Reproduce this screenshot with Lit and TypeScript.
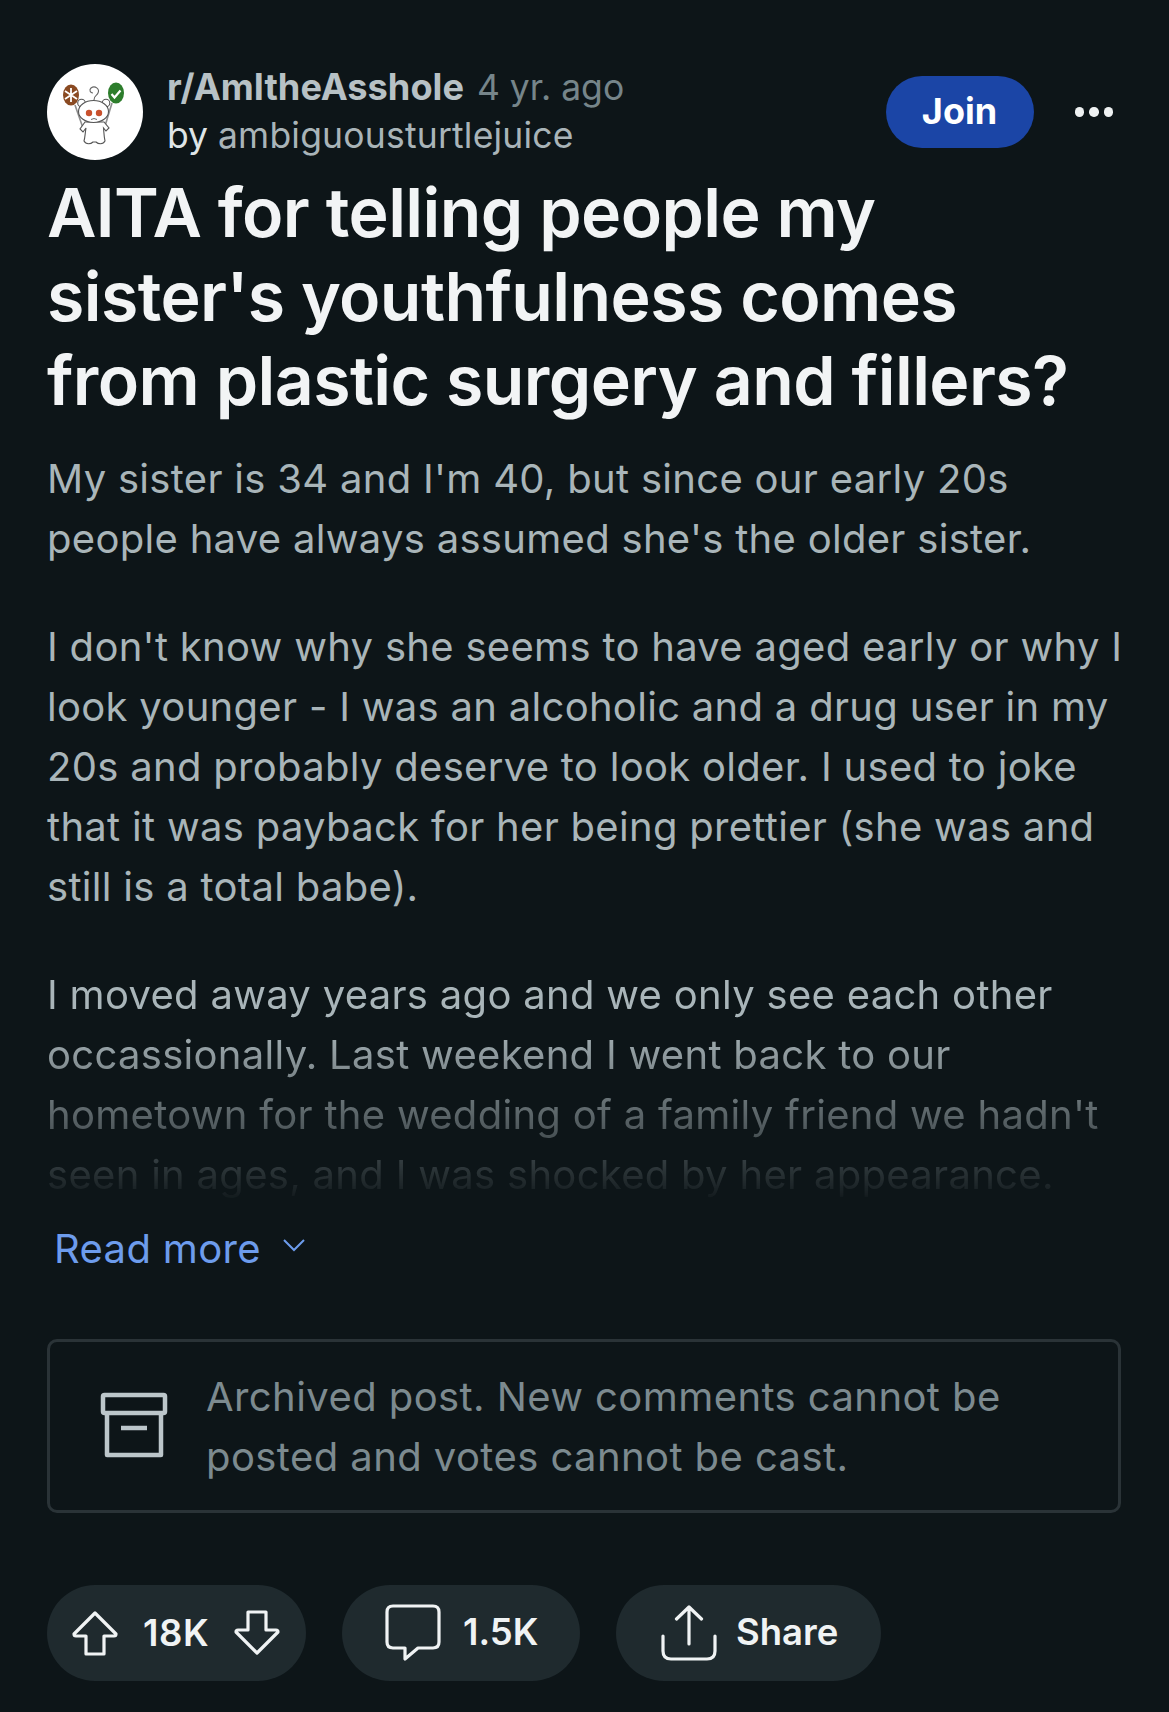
import { LitElement, html, css } from "lit";
import { customElement } from "lit/decorators.js";

@customElement("app-root")
export class AppRoot extends LitElement {
  static styles = css`
    :host { display: block; width: 1169px; height: 1712px; background: #0d1518; font-family: Inter, "Liberation Sans", sans-serif; overflow: hidden; }
    .page { padding: 64px 48px 0 47px; box-sizing: border-box; }
    .header { display: flex; align-items: center; height: 96px; }
    .avatar { width: 96px; height: 96px; flex: none; display: block; }
    .meta { margin-left: 24px; flex: 1; font-size: 35.5px; line-height: 48px; margin-top: -2px; white-space: nowrap; }
    .sub { font-weight: 700; font-size: 36.2px; color: #b7c1c5; }
    .time { color: #76858a; margin-left: 3px; }
    .by { color: #dfe5e7; }
    .user { color: #a9b4b8; letter-spacing: 0.2px; }
    .join { width: 148px; height: 72px; border-radius: 36px; background: #1b45a6; color: #fff; font-weight: 700; font-size: 36px; display: flex; align-items: center; justify-content: center; padding-bottom: 2px; box-sizing: border-box; }
    .dots { display: flex; gap: 5px; margin-left: 41px; margin-right: 8px; }
    .dots i { width: 9.5px; height: 9.5px; border-radius: 50%; background: #eef1f2; display: block; }
    h1 { margin: 10px 0 0; font-size: 68px; line-height: 84px; font-weight: 600; color: #f2f4f5; letter-spacing: -0.6px; white-space: nowrap; }
    .body { margin-top: 27px; font-size: 40px; line-height: 60px; color: #a9b5b9; white-space: nowrap; letter-spacing: 0.3px; }
    .body p { margin: 0 0 48px; }
    .body p:last-child { margin: 0; -webkit-mask-image: linear-gradient(#000 25%, transparent 100%); mask-image: linear-gradient(#000 25%, transparent 100%); }
    .more { margin-top: 13px; display: flex; align-items: center; height: 60px; color: #6d9cec; font-size: 40px; padding-left: 7px; letter-spacing: 0.35px; }
    .more svg { margin-left: 21px; width: 24px; height: 14px; margin-top: -6px; }
    .box { margin-top: 61px; height: 174px; box-sizing: border-box; border: 3px solid #2a3337; border-radius: 10px; display: flex; align-items: center; padding-left: 49px; color: #7c8a8f; font-size: 40px; line-height: 60px; white-space: nowrap; letter-spacing: 0.42px; }
    .box svg { width: 70px; height: 68px; flex: none; margin-right: 37px; }
    .box div { padding-top: 2px; }
    .actions { margin-top: 72px; display: flex; gap: 36px; }
    .pill { height: 96px; border-radius: 48px; background: #1f2a2e; display: flex; align-items: center; color: #f0f3f4; font-size: 36.5px; font-weight: 600; box-sizing: border-box; }
    .pill span { margin-top: -2px; }
    .pill svg { display: block; flex: none; fill: none; stroke: #f0f3f4; stroke-width: 3.2; stroke-linejoin: round; stroke-linecap: round; }
    .vote { width: 259px; padding-left: 25px; }
    .vote span { margin: 0 25px 0 25px; letter-spacing: 0.6px; }
    .comments { width: 238px; padding-left: 43px; }
    .comments span { margin-left: 22px; }
    .share { width: 265px; padding-left: 45px; }
    .share span { margin-left: 19px; }
  `;

  render() {
    return html`<div class="page">
      <div class="header">
        <svg class="avatar" viewBox="17 14 96 96">
          <circle cx="65" cy="62" r="48" fill="#fff"/>
          <g fill="none" stroke="#8f8f8f" stroke-width="1.6"><path d="M45 55 L53 78"/><path d="M82 53 L75 76"/></g>
          <ellipse cx="41" cy="45" rx="8" ry="10.5" fill="#8a4a22"/>
          <ellipse cx="86" cy="43" rx="8" ry="10.5" fill="#2d7d2c"/>
          <path d="M41 38v14M35 41l12 8M47 41l-12 8" stroke="#fff" stroke-width="1.8" fill="none"/>
          <path d="M81.500 44l3 3.500 6-7" stroke="#fff" stroke-width="2.2" fill="none"/>
          <g fill="#fff" stroke="#555" stroke-width="1.1">
            <circle cx="51.500" cy="53" r="3.800"/><circle cx="76" cy="53" r="3.800"/>
            <path d="M55 72 L50 79 L53 82 L56 78 C55 84 55 88 54 91 C56 95 61 94 63 92 L66 92 C68 94 73 95 75 91 C74 87 74 83 73.500 78 L76 81 L79 78 L74 72Z"/>
            <ellipse cx="63.500" cy="61.500" rx="15" ry="11"/>
          </g>
          <path d="M64 50 C64 45 67 46 68 43 C70 39 65 35 61 38 C59 40 60 43 63 43" fill="none" stroke="#666" stroke-width="1.1"/>
          <circle cx="59" cy="63" r="3.200" fill="#c9502c"/><circle cx="69" cy="63" r="3.200" fill="#c9502c"/>
          <path d="M61 69.500 q3 -2 6 0" stroke="#666" stroke-width="1" fill="none"/>
        </svg>
        <div class="meta">
          <div><span class="sub">r/AmItheAsshole</span> <span class="time">4 yr. ago</span></div>
          <div><span class="by">by</span> <span class="user">ambiguousturtlejuice</span></div>
        </div>
        <div class="join">Join</div>
        <div class="dots"><i></i><i></i><i></i></div>
      </div>
      <h1>AITA for telling people my<br>sister's youthfulness comes<br>from plastic surgery and fillers?</h1>
      <div class="body">
        <p>My sister is 34 and I'm 40, but since our early 20s<br>people have always assumed she's the older sister.</p>
        <p>I don't know why she seems to have aged early or why I<br>look younger - I was an alcoholic and a drug user in my<br>20s and probably deserve to look older. I used to joke<br>that it was payback for her being prettier (she was and<br>still is a total babe).</p>
        <p>I moved away years ago and we only see each other<br>occassionally. Last weekend I went back to our<br>hometown for the wedding of a family friend we hadn't<br>seen in ages, and I was shocked by her appearance.</p>
      </div>
      <div class="more">Read more
        <svg viewBox="0 0 24 14"><path d="M2 2l10 10L22 2" fill="none" stroke="#6d9cec" stroke-width="2"/></svg>
      </div>
      <div class="box">
        <svg viewBox="0 0 70 68"><g fill="none" stroke="#bcc6ca" stroke-width="4.500" stroke-linejoin="round"><rect x="4" y="3" width="62" height="18" rx="1.500"/><path d="M8 21V63H62V21"/></g><path d="M22 36H48" stroke="#bcc6ca" stroke-width="4.500"/></svg>
        <div>Archived post. New comments cannot be<br>posted and votes cannot be cast.</div>
      </div>
      <div class="actions">
        <div class="pill vote">
          <svg width="46" height="46" viewBox="0 0 46 46"><path d="M23 3 L44 24 Q44 26 42 26 H32 V44 H14 V26 H4 Q2 26 2 24 Z"/></svg>
          <span>18K</span>
          <svg width="46" height="46" viewBox="0 0 46 46"><path d="M23 43 L44 22 Q44 20 42 20 H32 V2 H14 V20 H4 Q2 20 2 22 Z"/></svg>
        </div>
        <div class="pill comments">
          <svg width="56" height="58" viewBox="0 0 56 58"><path d="M8 2 H48 Q54 2 54 8 V38 Q54 44 48 44 H33 L20 55 V44 H8 Q2 44 2 38 V8 Q2 2 8 2Z"/></svg>
          <span>1.5K</span>
        </div>
        <div class="pill share">
          <svg width="56" height="56" viewBox="0 0 56 56"><path d="M28 2 V39 M15.500 14 L28 2 L40.500 14 M2 31 V46 Q2 54 10 54 H46 Q54 54 54 46 V31"/></svg>
          <span>Share</span>
        </div>
      </div>
    </div>`;
  }
}
